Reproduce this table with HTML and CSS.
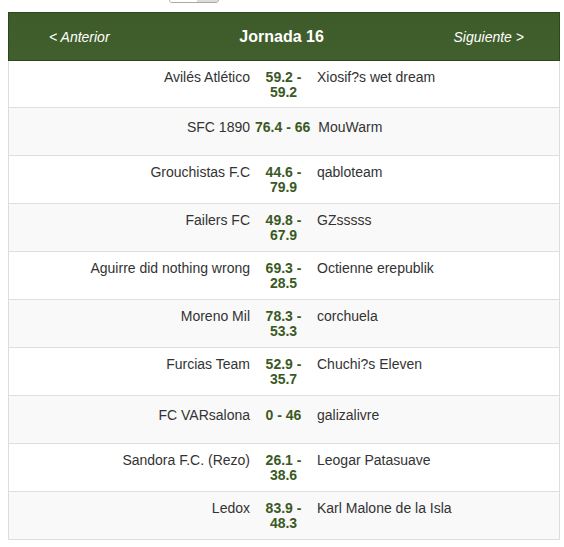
FILE: index.html
```html
<!DOCTYPE html>
<html lang="es">
<head>
<meta charset="utf-8">
<title>Jornada 16</title>
<link rel="stylesheet" href="styles.css">
</head>
<body>
<div class="topbar">
  <div class="picker"><span class="picker-field"></span><span class="picker-btn"></span></div>
</div>
<div class="fixture">
  <div class="fixture-head">
    <a class="nav" href="#">&lt; Anterior</a>
    <h2 class="title">Jornada 16</h2>
    <a class="nav" href="#">Siguiente &gt;</a>
  </div>
  <div class="match"><span class="home">Avilés Atlético</span><span class="score">59.2 - 59.2</span><span class="away">Xiosif?s wet dream</span></div>
  <div class="match single inline"><span class="home">SFC 1890</span><span class="score">76.4 - 66</span><span class="away">MouWarm</span></div>
  <div class="match"><span class="home">Grouchistas F.C</span><span class="score">44.6 - 79.9</span><span class="away">qabloteam</span></div>
  <div class="match"><span class="home">Failers FC</span><span class="score">49.8 - 67.9</span><span class="away">GZsssss</span></div>
  <div class="match"><span class="home">Aguirre did nothing wrong</span><span class="score">69.3 - 28.5</span><span class="away">Octienne erepublik</span></div>
  <div class="match"><span class="home">Moreno Mil</span><span class="score">78.3 - 53.3</span><span class="away">corchuela</span></div>
  <div class="match"><span class="home">Furcias Team</span><span class="score">52.9 - 35.7</span><span class="away">Chuchi?s Eleven</span></div>
  <div class="match single"><span class="home">FC VARsalona</span><span class="score">0 - 46</span><span class="away">galizalivre</span></div>
  <div class="match"><span class="home">Sandora F.C. (Rezo)</span><span class="score">26.1 - 38.6</span><span class="away">Leogar Patasuave</span></div>
  <div class="match"><span class="home">Ledox</span><span class="score">83.9 - 48.3</span><span class="away">Karl Malone de la Isla</span></div>
</div>
</body>
</html>
```
FILE: styles.css
```css
* { box-sizing: border-box; }

body {
  margin: 0;
  padding: 0 0 0 8px;
  font-family: "Liberation Sans", Arial, sans-serif;
  font-size: 14px;
  color: #333;
  background: #fff;
}

.topbar {
  height: 4px;
  overflow: hidden;
  padding-left: 161px;
}

.picker {
  display: flex;
  width: 50px;
  height: 22px;
  margin-top: -19px;
  border: 1px solid #a9a9a9;
  border-radius: 3px;
  overflow: hidden;
}

.picker-field { flex: 1; background: #fff; }
.picker-btn { width: 21px; background: #dcdcdc; }

.fixture {
  width: 552px;
  margin-top: 8px;
}

.fixture-head {
  display: flex;
  align-items: center;
  justify-content: space-between;
  height: 49px;
  padding: 0 35px 0 40px;
  background: linear-gradient(#3d5c29, #405f2c);
  border: 1px solid #2b481b;
}

.nav {
  color: #fff;
  font-style: italic;
  font-size: 14px;
  text-decoration: none;
}

.title {
  margin: 0;
  color: #fff;
  font-size: 16px;
  font-weight: bold;
}

.match {
  display: flex;
  align-items: flex-start;
  height: 48px;
  padding-top: 9px;
  line-height: 15px;
  border: 1px solid #ddd;
  border-top: none;
  background: #fff;
}

.match:nth-child(2) { height: 47px; }

.match:nth-child(odd) { background: #f9f9f9; }

.match.single { padding-top: 12px; }

.home {
  flex: 0 0 247px;
  padding-right: 6px;
  text-align: right;
}

.score {
  flex: 0 0 55px;
  padding: 0 6px;
  text-align: center;
  font-weight: bold;
  color: #3b5924;
}

.match.inline .score {
  flex: none;
  padding: 0 2px 0 5px;
  margin-left: -6px;
  white-space: nowrap;
}

.away {
  flex: 1;
  padding-left: 6px;
}
```
